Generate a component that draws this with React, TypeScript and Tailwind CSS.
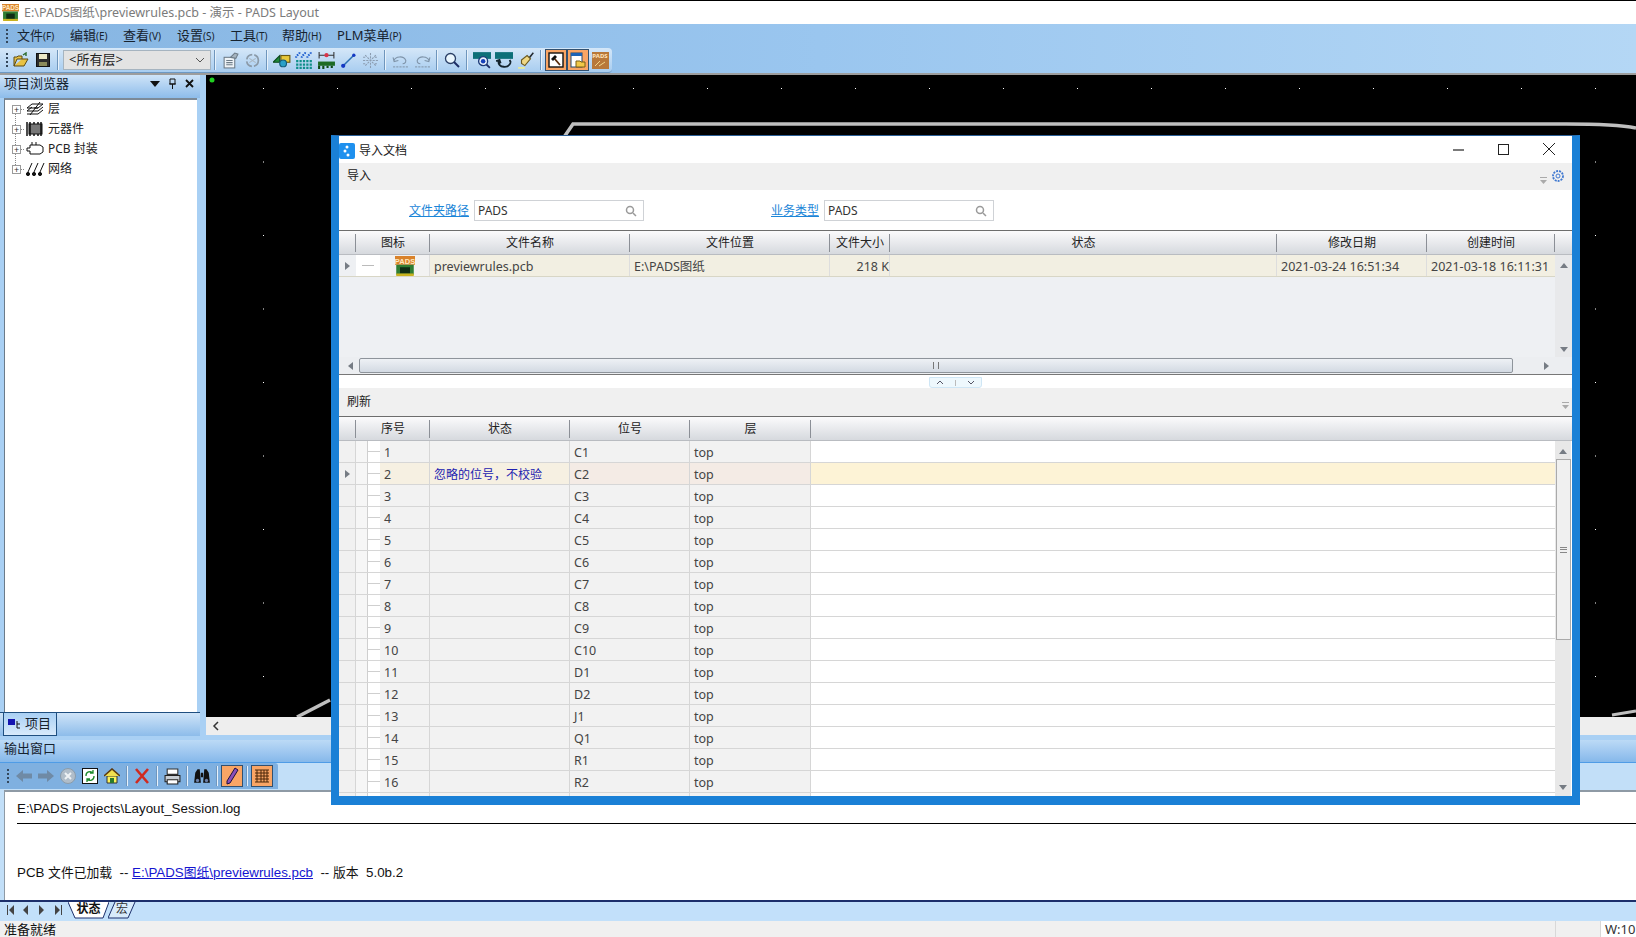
const font = "[font-family:'Noto_Sans','Noto_Sans_CJK_SC',sans-serif]";

function PadsIcon({ size = 16 }: { size?: number }) {
  return (
    <svg width={size} height={size} viewBox="0 0 16 16">
      <rect x="0" y="0" width="16" height="7" fill="#d9822b" />
      <text x="8" y="6" fontSize="6" fontWeight="700" fill="#ffe9c0" textAnchor="middle" fontFamily="Liberation Sans">PADS</text>
      <rect x="1" y="7" width="14" height="8" fill="#2f7d32" />
      <rect x="4" y="9" width="8" height="5" fill="#0f2d14" />
      <rect x="1" y="14" width="14" height="2" fill="#c9b21f" />
    </svg>
  );
}

function Grip() {
  return (
    <div className="flex w-[7px] flex-col items-center gap-[2px]">
      {[0, 1, 2, 3].map((i) => (
        <div key={i} className="h-[2px] w-[2px] bg-[#33475c]" />
      ))}
    </div>
  );
}

function Sep() {
  return <div className="mx-[3px] h-[20px] w-[2px] shrink-0 border-r border-[#e8f2fb] bg-[#6f96bd]" />;
}

function Tool({ children, active }: { children: React.ReactNode; active?: boolean }) {
  return (
    <div className={`flex w-[22px] shrink-0 items-center justify-center ${active ? "h-[22px] border border-[#32506f] bg-[#f9a565]" : "h-[24px]"}`}>
      {children}
    </div>
  );
}

const Ico = ({ children, s = 16 }: { children: React.ReactNode; s?: number }) => (
  <svg width={s} height={s} viewBox="0 0 16 16" fill="none">
    {children}
  </svg>
);

const toolIcons: Record<string, React.ReactNode> = {
  open: (
    <Ico>
      <path d="M1 14V5h3l1-1h4v3H4L1 14h10l4-7H9" fill="#e8c244" stroke="#5c4a12" />
      <path d="M10 3l3-2v3" stroke="#2c6a2e" strokeWidth="1.4" />
    </Ico>
  ),
  save: (
    <Ico>
      <rect x="1.5" y="1.5" width="13" height="13" fill="#2c2c2c" stroke="#111" />
      <rect x="4" y="2" width="8" height="5" fill="#ece9c7" />
      <rect x="4" y="10" width="8" height="4" fill="#8a8a5a" />
    </Ico>
  ),
  props: (
    <Ico s={17}>
      <rect x="2" y="5" width="10" height="10" fill="#eef3f7" stroke="#6e7c88" />
      <path d="M4 8h6M4 10h6M4 12h6" stroke="#6e7c88" />
      <path d="M8 5l4-4 3 1-2 4z" fill="#a5b4c0" stroke="#6e7c88" />
    </Ico>
  ),
  refresh: (
    <Ico s={17}>
      <circle cx="8" cy="8" r="5.5" stroke="#8b9aa8" strokeWidth="1.6" strokeDasharray="7 2" />
      <path d="M5 6l6 4M11 6l-6 4" stroke="#a9b6c2" />
    </Ico>
  ),
  shapes: (
    <Ico s={18}>
      <path d="M0 10l6-6v6z" fill="#1f8a3a" stroke="#0d4a1d" />
      <rect x="7" y="4" width="8" height="6" fill="#e7c83a" stroke="#6b5a10" />
      <circle cx="9" cy="11" r="3" fill="#2aa0c8" stroke="#125a78" />
    </Ico>
  ),
  stipple: (
    <Ico s={18}>
      <path d="M4 1c0 3-3 2-3 5M9 1c0 3-3 2-3 5M14 1c0 3-3 2-3 5" stroke="#1f5fd0" strokeWidth="1.800" strokeDasharray="1.500 1" />
      <path d="M1 9h14M1 12h14M1 15h14" stroke="#0f8f8a" strokeWidth="2" strokeDasharray="2 1" />
    </Ico>
  ),
  board: (
    <svg width="19" height="19" viewBox="0 0 18 18" fill="none">
      <path d="M2 1v6M16 1v6M2 4h14" stroke="#333" />
      <circle cx="9" cy="4" r="2" fill="#d8344a" />
      <rect x="1" y="10" width="16" height="4" fill="#1d6b25" />
      <path d="M2 14v3M6 14v3M10 14v2M14 14v2" stroke="#0f4a16" strokeWidth="2" />
    </svg>
  ),
  route: (
    <Ico s={17}>
      <path d="M3 13L13 3" stroke="#2b6fb0" strokeWidth="1.4" />
      <circle cx="3" cy="13" r="2" fill="#1438c4" />
      <circle cx="13" cy="3" r="1.6" fill="#1438c4" />
    </Ico>
  ),
  burst: (
    <Ico s={17}>
      <path d="M8 1v14M1 8h14M3 3l10 10M13 3L3 13M1 5h3M12 5h3M1 11h3M12 11h3" stroke="#8b9cb0" strokeDasharray="2 1" />
    </Ico>
  ),
  undo: (
    <Ico s={17}>
      <path d="M2 8c1-4 9-5 11 0 0 2-1 3-3 3" stroke="#7e93a8" />
      <path d="M1 5l1 4 4-1" stroke="#7e93a8" />
      <path d="M1 14h14" stroke="#8ba0b5" strokeDasharray="2 1" />
    </Ico>
  ),
  redo: (
    <Ico s={17}>
      <path d="M14 8C13 4 5 3 3 8c0 2 1 3 3 3" stroke="#7e93a8" />
      <path d="M15 5l-1 4-4-1" stroke="#7e93a8" />
      <path d="M1 14h14" stroke="#8ba0b5" strokeDasharray="2 1" />
    </Ico>
  ),
  search: (
    <Ico>
      <circle cx="6.500" cy="6.500" r="5" fill="#eaf6fd" stroke="#2a3f66" strokeWidth="1.300" />
      <path d="M10 10l5 5" stroke="#1c2d66" strokeWidth="2" />
    </Ico>
  ),
  view: (
    <Ico s={18}>
      <path d="M0 1h16v6H0z" fill="#0d6f78" />
      <circle cx="9" cy="9" r="4" fill="#e8f1fb" stroke="#1c3a78" strokeWidth="1.200" />
      <circle cx="9" cy="9" r="2" fill="#1740b8" />
      <path d="M12 12l3 3" stroke="#1c2d66" strokeWidth="1.600" />
    </Ico>
  ),
  view2: (
    <Ico s={18}>
      <path d="M0 1h16v6H0z" fill="#0d6f78" />
      <path d="M3 9c0 6 9 7 11 1M1 9l3-1 1 3M14 10l-1-2" stroke="#13232e" strokeWidth="1.600" />
    </Ico>
  ),
  brush: (
    <Ico s={18}>
      <path d="M10 6l4-5 1 1-4 5z" fill="#22282e" />
      <path d="M4 8l5-4 3 3-5 6-3-2z" fill="#f0d884" stroke="#6b5a20" />
      <path d="M1 15h6" stroke="#e7eb9a" strokeWidth="1.600" />
    </Ico>
  ),
  hammer: (
    <Ico>
      <rect x="1" y="1" width="14" height="14" fill="#fff" stroke="#111" strokeWidth="1.400" />
      <path d="M12 13L6 6" stroke="#5a2d0c" strokeWidth="1.800" />
      <path d="M3 7l4-4 2 2-4 4z" fill="#111" />
    </Ico>
  ),
  windowFolder: (
    <Ico>
      <rect x="1" y="1" width="11" height="14" fill="#fff" stroke="#24486e" />
      <rect x="1" y="1" width="11" height="3" fill="#1a63b8" />
      <path d="M6 9h4l1 1h4v5H6z" fill="#f1c848" stroke="#7a5f13" />
    </Ico>
  ),
};

const topTools: (string | null)[] = ["props", "refresh", null, "shapes", "stipple", "board", "route", "burst", null, "undo", "redo", null, "search", null, "view", "view2", "brush"];

function MenuItem({ label, hot, className }: { label: string; hot: string; className: string }) {
  return (
    <div className={`text-[13px] text-[#16222e] ${className}`}>
      {label}
      <span className="text-[10px]">({hot})</span>
    </div>
  );
}

function TitleBar() {
  return (
    <div className="flex h-[24px] items-center gap-[5px] border-t border-black bg-white pl-[2px]">
      <PadsIcon size={17} />
      <span className="pt-[2px] text-[12.5px] text-[#7b7b7b]">E:\PADS图纸\previewrules.pcb - 演示 - PADS Layout</span>
    </div>
  );
}

function MenuBar() {
  return (
    <div className="flex h-[24px] items-center pl-[3px]">
      <Grip />
      <MenuItem label="文件" hot="F" className="ml-[7px] w-[53px]" />
      <MenuItem label="编辑" hot="E" className="w-[53px]" />
      <MenuItem label="查看" hot="V" className="w-[54px]" />
      <MenuItem label="设置" hot="S" className="w-[53px]" />
      <MenuItem label="工具" hot="T" className="w-[52px]" />
      <MenuItem label="帮助" hot="H" className="w-[55px]" />
      <MenuItem label="PLM菜单" hot="P" className="text-[12px]" />
    </div>
  );
}

function ToolBar() {
  return (
    <div className="h-[27px]">
      <div className="flex h-[25px] w-[612px] items-center rounded-r-[4px] border-b border-[#6d99c4] bg-gradient-to-b from-[#d5e7f8] to-[#a8cdf0] pl-[3px]">
        <Grip />
        <Tool>{toolIcons.open}</Tool>
        <Tool>{toolIcons.save}</Tool>
        <Sep />
        <div className="ml-[1px] flex h-[20px] w-[148px] shrink-0 items-center justify-between border border-[#a6b4c0] bg-[#e3e3e3] pl-[5px] pr-[5px] text-[13px] text-[#222]">
          <span>&lt;所有层&gt;</span>
          <svg width="10" height="6" viewBox="0 0 10 6" fill="none">
            <path d="M1 1l4 4 4-4" stroke="#555" />
          </svg>
        </div>
        <Sep />
        {topTools.map((t, i) => (t ? <Tool key={i}>{toolIcons[t]}</Tool> : <Sep key={i} />))}
        <Sep />
        <Tool active>{toolIcons.hammer}</Tool>
        <Tool active>{toolIcons.windowFolder}</Tool>
        <Tool>
          <div className="flex h-[17px] w-[17px] flex-col items-center bg-[#b8783a] pt-[1px] text-[6px] font-bold leading-[7px] text-[#ffe4bd]">
            PADS
            <svg width="13" height="7" viewBox="0 0 13 7" fill="none">
              <path d="M1 6l5-5M5 6l6-4" stroke="#f2d68c" />
            </svg>
          </div>
        </Tool>
      </div>
      <div className="h-[2px] bg-[#9d9d9d]" />
    </div>
  );
}

const tree = [
  {
    label: "层",
    icon: (
      <svg width="20" height="16" viewBox="0 0 20 16" fill="none" stroke="#111">
        <path d="M2 7l5-4h11l-5 4zM2 10l5-4M13 7h-4M2 10h11l5-4M2 13h11l5-4M15 1L5 14" />
      </svg>
    ),
  },
  {
    label: "元器件",
    icon: (
      <svg width="20" height="16" viewBox="0 0 20 16">
        <rect x="4" y="3" width="13" height="10" fill="#777" stroke="#111" />
        <path d="M2 1v14M5 1v14M9 1v2M13 1v2M16 1v14M9 13v2M13 13v2" stroke="#111" strokeWidth="1.500" />
      </svg>
    ),
  },
  {
    label: "PCB 封装",
    icon: (
      <svg width="20" height="16" viewBox="0 0 20 16" fill="none" stroke="#111">
        <path d="M5 4h10l3 2v5l-3 2H5V10H2V7h3zM7 1v3M11 1v3" />
      </svg>
    ),
  },
  {
    label: "网络",
    icon: (
      <svg width="20" height="16" viewBox="0 0 20 16" fill="none" stroke="#111">
        <path d="M3 11l4-9M9 11l4-9M15 11l4-9" />
        <circle cx="3" cy="13" r="1.600" fill="#111" />
        <circle cx="9" cy="13" r="1.600" fill="#111" />
        <circle cx="15" cy="13" r="1.600" fill="#111" />
      </svg>
    ),
  },
];

function LeftPanel() {
  return (
    <div className="flex h-full w-[200px] shrink-0 flex-col bg-[#a9d0f4]">
      <div className="flex h-[23px] items-center justify-between bg-gradient-to-b from-[#cfe4f8] to-[#8dbcea] pb-[6px] pl-[4px] pr-[6px]">
        <span className="text-[13px] text-[#16222e]">项目浏览器</span>
        <div className="flex items-center gap-[8px] text-[#111]">
          <svg width="10" height="6" viewBox="0 0 10 6"><path d="M0 0h10L5 6z" fill="#111" /></svg>
          <svg width="9" height="11" viewBox="0 0 9 11" fill="none" stroke="#111"><path d="M2 1h5v5H2zM1 6h7M4.500 6v5" /></svg>
          <svg width="9" height="9" viewBox="0 0 9 9" stroke="#111" strokeWidth="1.800"><path d="M1 1l7 7M8 1L1 8" /></svg>
        </div>
      </div>
      <div className="relative ml-[4px] mr-[3px] h-[614px] border-l border-t-2 border-[#6b7b8a] border-t-[#7c8a98] bg-white">
        <div className="absolute left-[10px] top-[9px] h-[60px] border-l border-dotted border-[#888]" />
        {tree.map((t) => (
          <div key={t.label} className="relative -top-[1px] flex h-[20px] items-center pl-[7px]">
            <div className="flex h-[9px] w-[9px] items-center justify-center border border-[#9a9a9a] bg-white text-[9px] leading-[7px] text-[#333]">+</div>
            <div className="w-[3px] border-t border-dotted border-[#888]" />
            <div className="ml-[1px] w-[20px]">{t.icon}</div>
            <span className="ml-[3px] text-[12px] text-[#222]">{t.label}</span>
          </div>
        ))}
      </div>
      <div className="flex h-[24px] items-end border-t border-[#1f4f80] bg-gradient-to-b from-[#cfe4f8] to-[#8dbcea] pl-[3px]">
        <div className="-mt-[1px] flex h-[23px] w-[54px] items-center gap-[3px] border-x border-b border-[#1f4f80] bg-gradient-to-b from-[#a9d0f4] to-[#d8eafb] pl-[4px] text-[13px] text-[#16222e]">
          <svg width="14" height="12" viewBox="0 0 14 12">
            <rect x="0" y="1" width="7" height="6" fill="#1414b0" />
            <path d="M9 3v7h3M9 6h3" stroke="#111" fill="none" />
          </svg>
          项目
        </div>
      </div>
    </div>
  );
}

function Canvas() {
  const xs = Array.from({ length: 20 }, (_, i) => 57 + i * 74);
  const ys = Array.from({ length: 9 }, (_, i) => 13 + i * 73.5);
  return (
    <div className="flex min-w-0 flex-1 flex-col border-l-[6px] border-[#a9d0f4] pb-[5px]">
      <div className="min-h-0 flex-1 overflow-hidden bg-black">
        <svg width="1430" height="642" viewBox="0 0 1430 642" fill="none">
          <circle cx="6" cy="5" r="2.500" fill="#20d020" />
          {xs.flatMap((x) => ys.map((y) => <rect key={`${x}-${y}`} x={x} y={y} width="1" height="1" fill="#fff" />))}
          <path d="M354 68L367 49H1360Q1410 49 1430 53" stroke="#bfbfbf" strokeWidth="3.500" />
          <path d="M91 642L124 625" stroke="#bfbfbf" strokeWidth="3.500" />
          <path d="M1406 640L1430 636" stroke="#bfbfbf" strokeWidth="3" />
        </svg>
      </div>
      <div className="flex h-[18px] items-center bg-[#eeeeee] pl-[6px]">
        <svg width="7" height="10" viewBox="0 0 7 10" fill="none" stroke="#333" strokeWidth="1.500"><path d="M6 1L2 5l4 4" /></svg>
      </div>
    </div>
  );
}

const outIcons: (React.ReactNode | null)[] = [
  <Ico key="b"><path d="M0 8l7-6v3.500h9v5H7V14z" fill="#6f8aa5" /></Ico>,
  <Ico key="f"><path d="M16 8L9 2v3.500H0v5h9V14z" fill="#6f8aa5" /></Ico>,
  <Ico key="s"><circle cx="8" cy="8" r="7.500" fill="#b0bdc9" stroke="#8b9cab" /><path d="M5 5l6 6M11 5l-6 6" stroke="#eef2f5" strokeWidth="2" /></Ico>,
  <Ico key="r"><rect x="0.500" y="0.500" width="15" height="15" fill="#fff" stroke="#111" /><path d="M4 8a4 4 0 0 1 7-3M12 8a4 4 0 0 1-7 3M11 2v3H8M5 14v-3h3" stroke="#1c8a2c" strokeWidth="1.300" /></Ico>,
  <Ico key="h"><path d="M3 8h10v7H3z" fill="#fdf25a" stroke="#333" /><path d="M0 8l8-7 8 7" stroke="#5c3a10" strokeWidth="1.600" fill="#f0e050" /><rect x="6" y="10" width="4" height="5" fill="#2a7a2a" /></Ico>,
  null,
  <Ico key="x"><path d="M2 1l12 14M14 1L2 15" stroke="#d02a20" strokeWidth="2.600" /></Ico>,
  null,
  <Ico key="p" s={17}><path d="M3 1h10v5H3z" fill="#fff" stroke="#333" /><path d="M1 7h14v6H1z" fill="#c8ced4" stroke="#222" /><path d="M3 11h10v4H3z" fill="#fff" stroke="#222" /></Ico>,
  null,
  <Ico key="bi" s={18}><path d="M1 14l1-9 2-3h2l1 12zM9 14l1-12h2l2 3 1 9zM7 5h2v4H7z" fill="#111" /><circle cx="4" cy="12" r="1.500" fill="#6b7fa8" /><circle cx="12" cy="12" r="1.500" fill="#6b7fa8" /></Ico>,
  null,
];

function OutputPanel() {
  return (
    <div className="flex h-[160px] flex-col">
      <div className="flex h-[22px] items-center bg-gradient-to-b from-[#bcdaf6] to-[#86b8ea] pb-[5px] pl-[4px] text-[13px] text-[#16222e]">输出窗口</div>
      <div className="h-[28px] border-t-[1px] border-[#4f9ce6] bg-[#c2dff8]">
        <div className="flex h-[26px] w-[278px] items-center rounded-tr-[3px] bg-[#7fb0e0] pl-[4px]">
          <Grip />
          <div className="w-[2px]" />
          {outIcons.map((icon, i) => (icon ? <Tool key={i}>{icon}</Tool> : <Sep key={i} />))}
          <Tool active>
            <svg width="14" height="18" viewBox="0 0 14 18" fill="none">
              <path d="M10 1l3 2-8 13-3 1 0-3z" fill="#8a4fb8" stroke="#1d1040" />
            </svg>
          </Tool>
          <Sep />
          <Tool active>
            <svg width="16" height="16" viewBox="0 0 16 16" fill="none" stroke="#4a2608">
              <path d="M1 2h14M1 5h14M1 8h14M1 11h14M1 14h14M3 2v12M7 2v12M10 2v12M13 2v12" />
            </svg>
          </Tool>
        </div>
      </div>
      <div className="flex min-h-0 flex-1 bg-[#c2dff8] pl-[4px]">
        <div className="flex min-w-0 flex-1 flex-col border-l border-t-2 border-[#8e9aa5] bg-white pl-[12px] font-['Liberation_Sans','Noto_Sans_CJK_SC',sans-serif] text-[13.33px] text-[#111]">
          <div className="mt-[8px] leading-[18px]">E:\PADS Projects\Layout_Session.log</div>
          <div className="mt-[5px] border-t border-black" />
          <div className="mt-[40px] whitespace-pre leading-[18px]">
            PCB <span className="text-[12.8px]">文件已加载</span>  -- <span className="text-[#1515d0] underline">E:\PADS<span className="text-[12.8px]">图纸</span>\previewrules.pcb</span>  -- <span className="text-[12.8px]">版本</span>  5.0b.2
          </div>
        </div>
      </div>
    </div>
  );
}

function SheetTabs() {
  return (
    <div className="flex h-[21px] items-start border-t-2 border-t-[#1c2f6b] bg-[#c2e0fa] pl-[6px]">
      <svg className="mt-[3px]" width="60" height="10" viewBox="0 0 60 10" fill="#444">
        <path d="M1 0h1v10H1zM8 0v10L3 5zM22 0v10l-5-5zM33 0l5 5-5 5zM49 0l5 5-5 5zM55 0h1v10h-1z" />
      </svg>
      <div className="relative ml-[2px] flex h-[17px] w-[41px] items-center justify-center pb-[3px] text-[12px] font-bold text-[#111]">
        <svg className="absolute inset-0" width="41" height="17" viewBox="0 0 41 17" fill="#fff" stroke="#1c2f6b">
          <path d="M0 0l7 16h28l6-16" />
        </svg>
        <span className="relative">状态</span>
      </div>
      <div className="relative -ml-[1px] flex h-[17px] w-[28px] items-center justify-center pb-[3px] text-[12px] text-[#333]">
        <svg className="absolute inset-0" width="28" height="17" viewBox="0 0 28 17" fill="#d8ebfb" stroke="#1c2f6b">
          <path d="M7 0L0 16h20l7-16" />
        </svg>
        <span className="relative">宏</span>
      </div>
    </div>
  );
}

function StatusBar() {
  return (
    <div className="flex h-[16px] items-center bg-[#f0f0f0] text-[13px] leading-[16px] text-[#111]">
      <span className="flex-1 pl-[4px]">准备就绪</span>
      <div className="h-full w-[45px] border-l border-[#d8d8d8]" />
      <div className="h-full w-[36px] border-l border-[#d8d8d8] bg-white pl-[4px] text-[#333]">W:10</div>
    </div>
  );
}

function HeadCell({ w, label }: { w: number; label: string }) {
  return (
    <div style={{ width: w }} className="relative flex shrink-0 items-center justify-center text-[12px] text-[#222]">
      {label}
      <div className="absolute right-0 top-[3px] h-[18px] w-[1px] bg-[#8b8f96]" />
    </div>
  );
}

const headBg = "flex h-[25px] border-y border-t-[#6d6d6d] border-b-[#b9bcc1] bg-gradient-to-b from-[#fbfbfc] to-[#d6d9de]";

const topCols: [number, string][] = [[74, "图标"], [200, "文件名称"], [200, "文件位置"], [60, "文件大小"], [387, "状态"], [150, "修改日期"], [128, "创建时间"]];

function Arrow({ d }: { d: "up" | "down" | "left" | "right" }) {
  const path = { up: "M0 5L4 0l4 5z", down: "M0 0l4 5 4-5z", left: "M5 0v8L0 4z", right: "M0 0v8l5-4z" }[d];
  const vertical = d === "up" || d === "down";
  return (
    <svg width={vertical ? 8 : 5} height={vertical ? 5 : 8} viewBox={vertical ? "0 0 8 5" : "0 0 5 8"}>
      <path d={path} fill="#767c84" />
    </svg>
  );
}

function ImportGrid() {
  const cell = "flex items-center pt-[3px]";
  return (
    <div className="flex h-[145px] flex-col border-b border-[#777]">
      <div className={headBg}>
        <div className="relative w-[17px]"><div className="absolute right-0 top-[3px] h-[18px] w-[1px] bg-[#8b8f96]" /></div>
        {topCols.map(([w, l]) => <HeadCell key={l} w={w} label={l} />)}
      </div>
      <div className="flex min-h-0 flex-1 bg-[#eef0f3]">
        <div className="w-[1216px]">
          <div className="flex h-[22px] border-b border-[#d8d6c6] bg-[#f2efe2] text-[12.5px] text-[#444]">
            <div className="flex w-[17px] items-center justify-center bg-[#eef0f3]"><Arrow d="right" /></div>
            <div className="flex w-[24px] items-center justify-center bg-white"><div className="w-[12px] border-t border-[#bbb]" /></div>
            <div className="flex w-[50px] items-center justify-center border-r border-[#ddd] bg-[#f2f2f2]"><PadsIcon size={20} /></div>
            <div className={`${cell} w-[200px] border-r border-[#ddd] pl-[4px]`}>previewrules.pcb</div>
            <div className={`${cell} w-[200px] border-r border-[#ddd] pl-[4px]`}>E:\PADS图纸</div>
            <div className={`${cell} w-[60px] justify-end border-r border-[#ddd]`}>218 K</div>
            <div className="w-[387px] border-r border-[#ddd]" />
            <div className={`${cell} w-[150px] border-r border-[#ddd] pl-[4px]`}>2021-03-24 16:51:34</div>
            <div className={`${cell} w-[128px] whitespace-nowrap pl-[4px]`}>2021-03-18 16:11:31</div>
          </div>
        </div>
        <div className="flex w-[17px] flex-col items-center justify-between bg-[#e8e9eb] pb-[5px] pt-[8px]">
          <Arrow d="up" />
          <Arrow d="down" />
        </div>
      </div>
      <div className="flex h-[17px] items-center bg-[#eceef1]">
        <div className="flex w-[20px] items-center justify-center pl-[2px]"><Arrow d="left" /></div>
        <div className="flex h-[15px] w-[1154px] items-center justify-center rounded-[2px] border border-[#8e949b] bg-gradient-to-b from-[#eef1f5] to-[#d3dae3]">
          <div className="h-[7px] w-[6px] border-x border-[#777] [background:linear-gradient(90deg,transparent_40%,#777_40%,#777_60%,transparent_60%)]" />
        </div>
        <div className="flex w-[42px] items-center justify-center pl-[24px]"><Arrow d="right" /></div>
      </div>
    </div>
  );
}

const refs = ["C1", "C2", "C3", "C4", "C5", "C6", "C7", "C8", "C9", "C10", "D1", "D2", "J1", "Q1", "R1", "R2", ""];

function RefreshGrid() {
  const cell = "flex items-center border-r border-[#d6d6d6] pl-[4px] pt-[3px]";
  return (
    <div className="flex min-h-0 flex-1 flex-col">
      <div className={headBg}>
        <div className="relative w-[17px]"><div className="absolute right-0 top-[3px] h-[18px] w-[1px] bg-[#8b8f96]" /></div>
        <HeadCell w={74} label="序号" />
        <HeadCell w={140} label="状态" />
        <HeadCell w={120} label="位号" />
        <HeadCell w={121} label="层" />
      </div>
      <div className="flex min-h-0 flex-1">
        <div className="w-[1216px] overflow-hidden">
          {refs.map((r, i) => {
            const sel = i === 1;
            return (
              <div key={i} className={`flex h-[22px] shrink-0 border-b border-[#d6d6d6] text-[12.5px] text-[#444] ${sel ? "bg-[#fdf3d6]" : "bg-white"}`}>
                <div className="flex w-[17px] items-center justify-center border-r border-[#d6d6d6] bg-[#f1f1f1]">{sel && <Arrow d="right" />}</div>
                <div className="w-[11px] bg-[#f6f6f6]" />
                <div className="relative w-[13px] border-l border-[#cfcfcf] bg-white"><div className="absolute left-0 top-[10px] w-full border-t border-[#cfcfcf]" /></div>
                <div className={`${cell} w-[50px] ${sel ? "bg-[#f6f0e2]" : "bg-[#f2f2f2]"}`}>{r ? i + 1 : ""}</div>
                <div className={`${cell} w-[140px] text-[12px] text-[#2222b0] ${sel ? "bg-[#f6f0e2]" : "bg-[#f2f2f2]"}`}>{sel ? "忽略的位号，不校验" : ""}</div>
                <div className={`${cell} w-[120px] ${sel ? "bg-[#f4ebe5]" : "bg-[#f2f2f2]"}`}>{r}</div>
                <div className={`${cell} w-[121px] ${sel ? "bg-[#f4ebe5]" : "bg-[#f2f2f2]"}`}>{r ? "top" : ""}</div>
              </div>
            );
          })}
        </div>
        <div className="flex w-[16px] flex-col items-center bg-[#e8e8e8] pt-[8px]">
          <Arrow d="up" />
          <div className="mt-[5px] flex h-[181px] w-[15px] items-center justify-center border border-[#aaa] bg-[#f0f0f0]">
            <div className="h-[6px] w-[7px] border-y border-[#888] [background:linear-gradient(#888,#888)_center/100%_1px_no-repeat]" />
          </div>
          <div className="flex-1" />
          <div className="pb-[6px]"><Arrow d="down" /></div>
        </div>
      </div>
    </div>
  );
}

function SearchField({ label, labelW, gap }: { label: string; labelW: number; gap: number }) {
  return (
    <div className="flex items-center" style={{ marginLeft: gap }}>
      <a style={{ width: labelW }} className="text-[12px] text-[#1b86d8] underline">{label}</a>
      <div className="ml-[5px] flex h-[21px] w-[170px] items-center justify-between border border-[#cfd2d6] bg-white pl-[3px] pr-[6px] text-[12px] text-[#333]">
        PADS
        <svg width="12" height="12" viewBox="0 0 12 12" fill="none" stroke="#9a9a9a" strokeWidth="1.500">
          <circle cx="5" cy="5" r="3.500" />
          <path d="M8 8l3 3" />
        </svg>
      </div>
    </div>
  );
}

function ImportDialog() {
  return (
    <div className="absolute left-[331px] top-[135px] flex h-[670px] w-[1249px] flex-col border-x-[8px] border-b-[9px] border-t border-[#1a80d6] border-t-[#2b5f96] bg-white">
      <div className="flex h-[27px] items-center pt-[3px]">
        <div className="flex h-[16px] w-[16px] items-center justify-center rounded-[2px] bg-[#1e90ee]">
          <svg width="10" height="12" viewBox="0 0 10 12" fill="#fff"><circle cx="5" cy="2" r="1.500" /><circle cx="3" cy="6" r="1.500" /><circle cx="6" cy="10" r="1.500" /></svg>
        </div>
        <span className="ml-[4px] flex-1 text-[12px] text-[#222]">导入文档</span>
        <div className="-mt-[4px] flex items-center text-[#111]">
          <svg className="mr-[34px]" width="11" height="11" viewBox="0 0 11 11" stroke="#222" strokeWidth="1.200"><path d="M0 6h11" /></svg>
          <svg className="mr-[34px]" width="11" height="11" viewBox="0 0 11 11" fill="none" stroke="#222"><rect x="0.500" y="0.500" width="10" height="10" /></svg>
          <svg className="mr-[17px]" width="12" height="12" viewBox="0 0 12 12" stroke="#222"><path d="M0 0l12 12M12 0L0 12" /></svg>
        </div>
      </div>
      <div className="flex h-[27px] items-center justify-between bg-[#f0f0f0] pb-[1px] pl-[8px] pr-[7px] text-[12px] text-[#222]">
        导入
        <div className="flex items-center gap-[4px]">
          <svg className="mt-[8px]" width="7" height="7" viewBox="0 0 7 7" fill="#aaa"><path d="M0 0h7v1H0zM0 3h7L3.500 7z" /></svg>
          <svg width="14" height="14" viewBox="0 0 14 14" fill="none" stroke="#3f78d0">
            <circle cx="7" cy="7" r="2" />
            <circle cx="7" cy="7" r="5" strokeWidth="1.800" strokeDasharray="2 1" />
          </svg>
        </div>
      </div>
      <div className="flex h-[40px] items-center pt-[1px]">
        <SearchField label="文件夹路径" labelW={60} gap={70} />
        <SearchField label="业务类型" labelW={48} gap={127} />
      </div>
      <ImportGrid />
      <div className="relative h-[13px] bg-white">
        <div className="absolute left-[590px] top-[2px] flex h-[11px] w-[53px] items-center justify-around rounded-b-[3px] border border-[#cfe6f5] bg-[#eef8fd]">
          <svg width="8" height="5" viewBox="0 0 8 5" fill="none" stroke="#556"><path d="M1 4l3-3 3 3" /></svg>
          <div className="h-[6px] w-[1px] bg-[#bbb]" />
          <svg width="8" height="5" viewBox="0 0 8 5" fill="none" stroke="#556"><path d="M1 1l3 3 3-3" /></svg>
        </div>
      </div>
      <div className="flex h-[28px] items-center justify-between bg-[#f0f0f0] pb-[1px] pl-[8px] pr-[3px] text-[12px] text-[#222]">
        刷新
        <svg className="mt-[8px]" width="7" height="7" viewBox="0 0 7 7" fill="#aaa"><path d="M0 0h7v1H0zM0 3h7L3.500 7z" /></svg>
      </div>
      <RefreshGrid />
    </div>
  );
}

export default function App() {
  return (
    <div className={`relative flex h-[937px] w-[1636px] flex-col overflow-hidden bg-[#a9d0f4] ${font}`}>
      <TitleBar />
      <div className="bg-gradient-to-r from-[#86b5e2] via-[#9ac6ef] to-[#b4d7f5]">
        <MenuBar />
        <ToolBar />
      </div>
      <div className="flex h-[665px] min-h-0">
        <LeftPanel />
        <Canvas />
      </div>
      <OutputPanel />
      <SheetTabs />
      <StatusBar />
      <ImportDialog />
    </div>
  );
}
